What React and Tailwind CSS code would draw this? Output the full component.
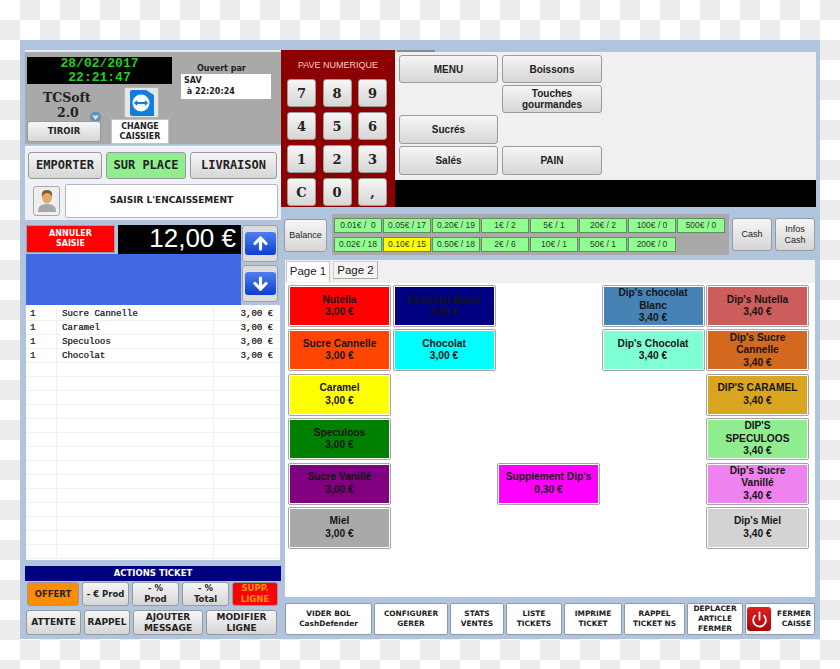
import { ArrowUp, ArrowDown, Power } from 'lucide-react';

const sans = 'font-["Liberation_Sans",Arial,sans-serif]';
const verdana = 'font-["DejaVu_Sans",Verdana,sans-serif]';

const coins = [
  ['0.01€ /  0', '0.05€ / 17', '0.20€ / 19', '1€ / 2', '5€ / 1', '20€ / 2', '100€ / 0', '500€ / 0'],
  ['0.02€ / 18', '0.10€ / 15', '0.50€ / 18', '2€ / 6', '10€ / 1', '50€ / 1', '200€ / 0'],
];

const ticket = [
  ['Sucre Cannelle', '3,00 €'],
  ['Caramel', '3,00 €'],
  ['Speculoos', '3,00 €'],
  ['Chocolat', '3,00 €'],
];

const products = [
  { name: 'Nutella', price: '3,00 €', pos: 'col-start-1 row-start-1', color: 'bg-[#ff0000]' },
  { name: 'Chocolat Blanc', price: '3,00 €', pos: 'col-start-2 row-start-1', color: 'bg-[#000080]' },
  { name: "Dip's chocolat\nBlanc", price: '3,40 €', pos: 'col-start-4 row-start-1', color: 'bg-[#4682b4]' },
  { name: "Dip's Nutella", price: '3,40 €', pos: 'col-start-5 row-start-1', color: 'bg-[#cd5c5c]' },
  { name: 'Sucre Cannelle', price: '3,00 €', pos: 'col-start-1 row-start-2', color: 'bg-[#ff4500]' },
  { name: 'Chocolat', price: '3,00 €', pos: 'col-start-2 row-start-2', color: 'bg-[#00ffff]' },
  { name: "Dip's Chocolat", price: '3,40 €', pos: 'col-start-4 row-start-2', color: 'bg-[#7fffd4]' },
  { name: "Dip's Sucre\nCannelle", price: '3,40 €', pos: 'col-start-5 row-start-2', color: 'bg-[#d2691e]' },
  { name: 'Caramel', price: '3,00 €', pos: 'col-start-1 row-start-3', color: 'bg-[#ffff00]' },
  { name: "DIP'S CARAMEL", price: '3,40 €', pos: 'col-start-5 row-start-3', color: 'bg-[#daa520]' },
  { name: 'Speculoos', price: '3,00 €', pos: 'col-start-1 row-start-4', color: 'bg-[#008000]' },
  { name: "DIP'S\nSPECULOOS", price: '3,40 €', pos: 'col-start-5 row-start-4', color: 'bg-[#90ee90]' },
  { name: 'Sucre Vanillé', price: '3,00 €', pos: 'col-start-1 row-start-5', color: 'bg-[#800080]' },
  { name: "Supplement Dip's", price: '0,30 €', pos: 'col-start-3 row-start-5', color: 'bg-[#ff00ff]' },
  { name: "Dip's Sucre\nVanillé", price: '3,40 €', pos: 'col-start-5 row-start-5', color: 'bg-[#ee82ee]' },
  { name: 'Miel', price: '3,00 €', pos: 'col-start-1 row-start-6', color: 'bg-[#a9a9a9]' },
  { name: "Dip's Miel", price: '3,40 €', pos: 'col-start-5 row-start-6', color: 'bg-[#d3d3d3]' },
];

const bottomButtons = [
  ['VIDER BOL', 'CashDefender', 'w-[87px]'],
  ['CONFIGURER', 'GERER', 'w-[74px]'],
  ['STATS', 'VENTES', 'w-[54px]'],
  ['LISTE', 'TICKETS', 'w-[56px]'],
  ['IMPRIME', 'TICKET', 'w-[58px]'],
  ['RAPPEL', 'TICKET NS', 'w-[61px]'],
];

const Btn = ({ className = '', fill, children }) => (
  <div className={`flex items-center justify-center text-center border border-[#9a9a9a] rounded-[3px] leading-[11px] ${fill || 'bg-gradient-to-b from-[#f6f6f6] to-[#d6d6d6] text-[#222]'} ${className}`}>
    {children}
  </div>
);

const WhiteBtn = ({ className = '', children }) => (
  <div className={`flex items-center justify-center text-center border border-[#8f9aa8] rounded-[2px] bg-white text-[#222] ${className}`}>
    {children}
  </div>
);

const Product = ({ name, price, pos, color }) => (
  <div className={`${pos} border border-[#a4a4a4] rounded-[2px] bg-white p-px`}>
    <div className={`${color} h-full flex flex-col items-center justify-center text-center text-[#151515] ${sans} font-bold text-[10.2px] leading-[12.5px]`}>
      <span className="whitespace-pre-line">{name}</span>
      <span>{price}</span>
    </div>
  </div>
);

const ArrowBtn = ({ Icon }) => (
  <div className="w-[36px] h-[37px] border border-[#a0a0a0] rounded-[3px] bg-[#dcdcdc] flex items-center justify-center">
    <div className="w-[31px] h-[23px] rounded-[3px] bg-gradient-to-b from-[#4f7df0] to-[#0a3fd0] flex items-center justify-center">
      <Icon size={19} strokeWidth={4} color="#fff" />
    </div>
  </div>
);

const TeamViewerIcon = () => (
  <svg width="26" height="28" viewBox="0 0 26 28">
    <path d="M3 1h14l8 5v21H3a2 2 0 0 1-2-2V3a2 2 0 0 1 2-2z" fill="#0e7fe0" />
    <circle cx="12" cy="14" r="8.5" fill="#fff" />
    <path d="M4.8 14l3.4-3v2h7.6v-2l3.4 3-3.4 3v-2H8.2v2z" fill="#0e7fe0" />
  </svg>
);

const AvatarIcon = () => (
  <svg width="20" height="24" viewBox="0 0 20 24">
    <path d="M1 23c0-6 3-8 9-8s9 2 9 8z" fill="#a8a8a8" />
    <ellipse cx="10" cy="8" rx="5" ry="6.5" fill="#e0a872" />
    <path d="M5 8C4 2 7 1 10 1s6 1 5 7c-1-3-3-4-5-4S6 5 5 8z" fill="#8a5a2b" />
  </svg>
);

const GlobeIcon = () => (
  <svg width="13" height="12" viewBox="0 0 13 12" className="mb-[-3px]">
    <circle cx="6.5" cy="6" r="5.5" fill="#5c93b8" />
    <path d="M3 4.5h7L6.5 9z" fill="#d8e6ef" />
  </svg>
);

export default function App() {
  return (
    <div className="w-[840px] h-[669px] overflow-hidden pl-[20px] pt-[40px] bg-[repeating-conic-gradient(#ededed_0_25%,#ffffff_0_50%)] bg-size-[40px_40px]">
      <div className="w-[800px] h-[599px] bg-[#b0c4de] flex pl-[5px] pt-[10px]">
        {/* Left column */}
        <div className="w-[256px] flex flex-col">
          <div className="h-[94px] bg-[#a9a9a9] flex border-t-2 border-[#e8edf4] pl-[2px] pt-[5px]">
            <div className="w-[145px]">
              <div className="h-[27px] bg-black flex flex-col items-center justify-center font-['Liberation_Mono',monospace] font-bold text-[13px] leading-[14px] text-[#22cc22]">
                <span>28/02/2017</span>
                <span>22:21:47</span>
              </div>
              <div className="flex h-[35px] mt-[3px]">
                <div className="w-[97px] pl-[16px] font-['DejaVu_Serif',serif] font-bold text-[12.5px] leading-[15px] text-[#222] pt-[3px]">
                  <div>TCSoft</div>
                  <div className="pl-[14px] flex items-end gap-[10px]">2.0<GlobeIcon /></div>
                </div>
                <div className="w-[35px] h-[31px] bg-[#e6e6e6] border border-[#b5b5b5] rounded-[2px] flex items-center justify-center">
                  <TeamViewerIcon />
                </div>
              </div>
              <div className="flex items-start">
                <Btn className={`w-[74px] h-[21px] mt-[-1px] ${verdana} font-bold text-[8.5px]`}>TIROIR</Btn>
                <div className={`ml-[10px] w-[58px] h-[25px] mt-[-3px] bg-white border border-[#b9c6d8] flex items-center justify-center text-center text-[#222] ${verdana} font-bold text-[8px] leading-[10px]`}>
                  CHANGE<br />CAISSIER
                </div>
              </div>
            </div>
            <div className="pl-[9px] pt-[6px]">
              <div className={`pl-[16px] text-[#222] ${verdana} font-bold text-[8px] leading-[12px]`}>Ouvert par</div>
              <div className={`w-[90px] h-[25px] mt-[-1px] bg-white px-[3px] pt-px text-[#222] ${verdana} font-bold text-[8px] leading-[11px] whitespace-pre`}>
                {'SAV\n à 22:20:24'}
              </div>
            </div>
          </div>

          <div className="h-[74px] mt-[2px] bg-[#eef1f6] border-t border-white px-[3px] pt-[5px]">
            <div className="flex gap-[4px] font-['DejaVu_Sans_Mono',monospace] font-bold text-[12px]">
              <Btn className="w-[74px] h-[27px]">EMPORTER</Btn>
              <Btn className="w-[80px] h-[27px]" fill="bg-[#90ee90] text-[#222]">SUR PLACE</Btn>
              <Btn className="w-[87px] h-[27px]">LIVRAISON</Btn>
            </div>
            <div className="flex items-center mt-[5px] pl-[5px]">
              <div className="w-[27px] h-[30px] bg-[#efefef] border border-[#a8a8a8] rounded-[3px] flex items-center justify-center">
                <AvatarIcon />
              </div>
              <WhiteBtn className={`ml-[5px] w-[213px] h-[34px] border-[#b0b8c4] ${verdana} font-bold text-[9px]`}>SAISIR L'ENCAISSEMENT</WhiteBtn>
            </div>
          </div>

          <div className="h-[80px] mt-[5px] flex pl-px">
            <div className="w-[215px] flex flex-col">
              <div className="flex h-[29px]">
                <div className={`w-[89px] h-[28px] border border-[#a0a0a0] bg-[#ff0000] text-white ${verdana} font-bold text-[8px] leading-[10px] flex items-center justify-center text-center`}>
                  ANNULER<br />SAISIE
                </div>
                <div className={`ml-[3px] flex-1 bg-black text-white text-right pr-[5px] ${sans} text-[26px] leading-[27px] whitespace-nowrap`}>12,00 €</div>
              </div>
              <div className="flex-1 bg-[#4169e1]"></div>
            </div>
            <div className="flex flex-col gap-[3px] pl-px">
              <ArrowBtn Icon={ArrowUp} />
              <ArrowBtn Icon={ArrowDown} />
            </div>
          </div>

          <div className="h-[255px] mx-px pt-px bg-white font-['Liberation_Mono',monospace] text-[9px] text-[#333] overflow-hidden [text-shadow:0.2px_0_0_#333]">
            {Array.from({ length: 18 }).map((_, i) => (
              <div key={i} className="h-[14px] border-b border-[#f0f0f0] flex items-center first:mt-px">
                <div className="w-[31px] h-full pl-[4px] border-r border-[#f0f0f0] leading-[14px]">{ticket[i] ? '1' : ''}</div>
                <div className="w-[157px] h-full pl-[5px] border-r border-[#f0f0f0] leading-[14px]">{ticket[i]?.[0]}</div>
                <div className="flex-1 h-full pr-[7px] text-right leading-[14px]">{ticket[i]?.[1]}</div>
              </div>
            ))}
          </div>

          <div className={`mt-[6px] h-[15px] bg-[#000080] text-white text-center ${verdana} font-bold text-[8.5px] leading-[15px]`}>ACTIONS TICKET</div>
          <div className={`flex mt-px pl-[2px] gap-[3px] ${verdana} font-bold text-[8.5px]`}>
            <Btn className="w-[52px] h-[24px]" fill="bg-[#ff8c00] text-[#222]">OFFERT</Btn>
            <Btn className="w-[47px] h-[24px]">- € Prod</Btn>
            <Btn className="w-[47px] h-[24px]">- %<br />Prod</Btn>
            <Btn className="w-[47px] h-[24px]">- %<br />Total</Btn>
            <Btn className="w-[46px] h-[24px]" fill="bg-[#ff0000] text-[#ff9a00]">SUPP.<br />LIGNE</Btn>
          </div>
          <div className={`flex mt-[4px] pl-px gap-[3px] ${verdana} font-bold text-[9px]`}>
            <Btn className="w-[55px] h-[25px]">ATTENTE</Btn>
            <Btn className="w-[46px] h-[25px]">RAPPEL</Btn>
            <Btn className="w-[70px] h-[25px]">AJOUTER<br />MESSAGE</Btn>
            <Btn className="w-[71px] h-[25px]">MODIFIER<br />LIGNE</Btn>
          </div>
        </div>

        {/* Right column */}
        <div className="w-[535px] flex flex-col">
          <div className="flex h-[157px]">
            <div className="w-[114px] bg-[#8b0000] flex flex-col">
              <div className={`text-center text-[#ffc8c8] ${sans} text-[9px] leading-[12px] mt-[9px]`}>PAVE NUMERIQUE</div>
              <div className="grid grid-cols-3 gap-x-[6.5px] gap-y-[5px] mt-[8px] pl-[6px] w-fit font-['DejaVu_Serif',serif] font-bold text-[13px]">
                {['7', '8', '9', '4', '5', '6', '1', '2', '3', 'C', '0', ','].map((k) => (
                  <Btn key={k} className="w-[29px] h-[28px]">{k}</Btn>
                ))}
              </div>
            </div>
            <div className="flex-1 flex flex-col">
              <div className="h-[2px] flex">
                <div className="w-[38px] ml-[2px] bg-[#8a8a8a]"></div>
              </div>
              <div className={`h-[128px] bg-[#f0f0f0] pl-[4px] pt-[3px] grid grid-cols-[99px_100px] grid-rows-[28px_28px_29px_29px] gap-x-[4px] gap-y-[2px] content-start ${sans} font-bold text-[10px]`}>
                <Btn className="col-start-1 row-start-1">MENU</Btn>
                <Btn className="col-start-2 row-start-1">Boissons</Btn>
                <Btn className="col-start-2 row-start-2">Touches<br />gourmandes</Btn>
                <Btn className="col-start-1 row-start-3">Sucrés</Btn>
                <Btn className="col-start-1 row-start-4">Salés</Btn>
                <Btn className="col-start-2 row-start-4">PAIN</Btn>
              </div>
              <div className="h-[27px] bg-black"></div>
            </div>
          </div>

          <div className={`flex mt-[7px] h-[41px] ${sans} text-[9px]`}>
            <Btn className="ml-[3px] w-[43px] h-[33px] mt-[5px]">Balance</Btn>
            <div className="ml-[5px] w-[397px] bg-[#a9a9a9] pl-[2px] pt-[4px] flex flex-col gap-[4px] text-[8.5px]">
              {coins.map((row, r) => (
                <div key={r} className="flex gap-px">
                  {row.map((c) => (
                    <div key={c} className={`w-[48px] h-[15px] border border-[#5d8f5d] text-center leading-[13px] text-[#333] whitespace-pre ${c === '0.10€ / 15' ? 'bg-[#ffff00]' : 'bg-[#90ff90]'}`}>
                      {c}
                    </div>
                  ))}
                </div>
              ))}
            </div>
            <Btn className="ml-[3px] w-[40px] h-[33px] mt-[4px]">Cash</Btn>
            <Btn className="ml-[3px] w-[40px] h-[33px] mt-[4px]">Infos<br />Cash</Btn>
          </div>

          <div className="ml-[4px] mt-[5px] w-[530px] h-[337px] bg-white flex flex-col">
            <div className={`h-[23px] bg-[#f0f0f0] flex items-start pt-px pl-px gap-[3px] ${sans} text-[11.5px] text-[#222]`}>
              <div className="w-[44px] h-[21px] bg-white border border-[#c4c4c4] border-b-0 text-center leading-[19px]">Page 1</div>
              <div className="w-[45px] h-[18px] bg-[#f4f4f4] border border-[#a8a8a8] border-t-[#d0d0d0] border-l-[#d0d0d0] text-center leading-[17px]">Page 2</div>
            </div>
            <div className="flex-1 pl-[3px] pt-[2px] grid grid-cols-[repeat(5,103px)] grid-rows-[repeat(6,42px)] gap-x-[1.5px] gap-y-[2.4px] content-start">
              {products.map((p) => (
                <Product key={p.name} {...p} />
              ))}
            </div>
          </div>

          <div className={`flex gap-[2px] ml-[4px] mt-[6px] ${verdana} font-bold text-[7.4px] leading-[10px]`}>
            {bottomButtons.map(([a, b, w]) => (
              <WhiteBtn key={a} className={`${w} h-[32px]`}>{a}<br />{b}</WhiteBtn>
            ))}
            <WhiteBtn className="w-[56px] h-[32px]">DEPLACER<br />ARTICLE<br />FERMER</WhiteBtn>
            <WhiteBtn className="w-[70px] h-[32px] pl-px pr-[3px]">
              <div className="w-[24px] h-[24px] rounded-[3px] bg-gradient-to-b from-[#e02020] to-[#a80808] flex items-center justify-center">
                <Power size={17} strokeWidth={2.5} color="#fff" />
              </div>
              <span className="ml-auto text-right">FERMER<br />CAISSE</span>
            </WhiteBtn>
          </div>
        </div>
      </div>
    </div>
  );
}
